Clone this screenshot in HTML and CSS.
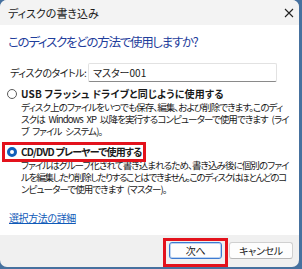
FILE: index.html
```html
<!DOCTYPE html>
<html lang="ja">
<head>
    <meta charset="UTF-8">
    <meta name="viewport" content="width=device-width, initial-scale=1.0">
    <title>ディスクの書き込み</title>
    <link rel="stylesheet" href="styles.css">
</head>
<body>
    <div class="window">
        <div class="titlebar">
            <span class="title">ディスクの書き込み</span>
            <svg class="close" width="10" height="10" viewBox="0 0 10 10">
                <path d="M1 1 L9 9 M9 1 L1 9" stroke="#222" stroke-width="1.1" fill="none"/>
            </svg>
        </div>

        <div class="content">
            <h1 class="main-instruction">このディスクをどの方法で使用しますか?</h1>

            <div class="title-row">
                <label class="field-label">ディスクのタイトル:</label>
                <div class="textbox">マスター001</div>
            </div>

            <div class="option">
                <div class="option-head">
                    <span class="radio"></span>
                    <span class="option-label">USB フラッシュ ドライブと同じように使用する</span>
                </div>
                <div class="option-desc">
                    <span>ディスク上のファイルをいつでも保存、編集、および削除できます。このディ</span>
                    <span>スクは Windows XP 以降を実行するコンピューターで使用できます (ライ</span>
                    <span>ブ ファイル システム)。</span>
                </div>
            </div>

            <div class="option second">
                <div class="option-head marked">
                    <span class="radio checked"></span>
                    <span class="option-label tight">CD/DVD プレーヤーで使用する</span>
                </div>
                <div class="option-desc">
                    <span>ファイルはグループ化されて書き込まれるため、書き込み後に個別のファイ</span>
                    <span class="squeeze">ルを編集したり削除したりすることはできません。このディスクはほとんどのコ</span>
                    <span>ンピューターで使用できます (マスター)。</span>
                </div>
            </div>

            <div class="help">
                <a class="help-link" href="#">選択方法の詳細</a>
            </div>
        </div>

        <div class="footer">
            <div class="marked-btn">
                <button class="btn default">次へ</button>
            </div>
            <button class="btn cancel">キャンセル</button>
        </div>
    </div>
</body>
</html>
```

FILE: styles.css
```css
* {
    margin: 0;
    padding: 0;
    box-sizing: border-box;
    font-family: "Noto Sans CJK JP", "Noto Sans", sans-serif;
}

body {
    background-color: #46719f;
    width: 302px;
    height: 269px;
    overflow: hidden;
    font-size: 10px;
    line-height: 12px;
}

.window {
    width: 299px;
    height: 267px;
    background-color: #f0f0f0;
    border-radius: 7px;
    overflow: hidden;
    display: flex;
    flex-direction: column;
}

.titlebar {
    height: 25px;
    flex-shrink: 0;
    background-color: #f3f3f3;
    display: flex;
    align-items: center;
    justify-content: space-between;
    padding: 0 5px 0 8px;
}

.title {
    font-size: 11px;
    line-height: 14px;
    color: #1a1a1a;
    font-feature-settings: "palt";
}

.close {
    display: block;
}

.content {
    background-color: #ffffff;
    height: 210px;
    flex-shrink: 0;
    padding: 8px 8px 0 8px;
}

.main-instruction {
    font-size: 12.5px;
    letter-spacing: -1.3px;
    font-weight: normal;
    color: #1f3e9c;
    font-feature-settings: "palt";
    line-height: 18px;
}

.title-row {
    display: flex;
    align-items: center;
    margin-top: 12px;
}

.field-label {
    width: 80px;
    padding-left: 2px;
    font-size: 10px;
    letter-spacing: -0.5px;
    color: #1a1a1a;
    white-space: nowrap;
    font-feature-settings: "palt";
}

.textbox {
    width: 189px;
    height: 19px;
    border: 1px solid #e2e2e2;
    border-bottom: 1px solid #8a8a8a;
    border-radius: 2px;
    font-size: 10px;
    line-height: 17px;
    padding-left: 4px;
    color: #1a1a1a;
    font-feature-settings: "palt";
}

.option {
    margin-top: 5px;
}

.option.second {
    margin-top: 8px;
}

.option-head {
    display: flex;
    align-items: center;
    height: 14px;
    white-space: nowrap;
}

.option-head.marked {
    margin-left: -3px;
    padding-left: 2px;
    width: 138px;
    outline: 3px solid #e3121c;
}

.radio {
    width: 10px;
    height: 10px;
    margin-left: -1px;
    margin-right: 4px;
    border: 1px solid #5a5a5a;
    border-radius: 50%;
    flex-shrink: 0;
}

.option-head.marked .radio {
    margin-left: 0;
}

.radio.checked {
    border: 3px solid #1160bb;
    background-color: #ffffff;
}

.option-label {
    font-size: 10px;
    letter-spacing: 0.2px;
    font-weight: bold;
    color: #1a1a1a;
    font-feature-settings: "palt";
}

.option-label.tight {
    letter-spacing: -0.8px;
}

.option-desc {
    padding-left: 13px;
    font-size: 9.5px;
    letter-spacing: -0.9px;
    word-spacing: 2.5px;
    line-height: 12px;
    color: #1a1a1a;
    font-feature-settings: "palt";
}

.option-desc span {
    display: block;
    white-space: nowrap;
}

.option-desc .squeeze {
    letter-spacing: -1.25px;
}

.help {
    margin-top: 16px;
    padding-left: 1px;
    line-height: 14px;
}

.help-link {
    font-size: 10px;
    letter-spacing: -0.4px;
    color: #0f5ab8;
    text-decoration: underline;
    font-feature-settings: "palt";
}

.footer {
    flex: 1;
    display: flex;
    justify-content: flex-end;
    align-items: flex-start;
    padding: 6px 6px 0 0;
    gap: 4px;
}

.marked-btn {
    outline: 3px solid #e3121c;
    padding: 1px 3px 5px 3px;
}

.btn {
    display: block;
    height: 17px;
    background-color: #fdfdfd;
    border: 1px solid #d0d0d0;
    border-bottom-color: #b8b8b8;
    border-radius: 3px;
    font-size: 10px;
    line-height: 14px;
    letter-spacing: -0.3px;
    color: #1a1a1a;
    font-feature-settings: "palt";
}

.btn.default {
    width: 53px;
    border: 1px solid #3c7ad1;
    box-shadow: inset 0 0 0 1px #bcd3f1;
}

.btn.cancel {
    width: 64px;
    margin-top: 1px;
}
```
